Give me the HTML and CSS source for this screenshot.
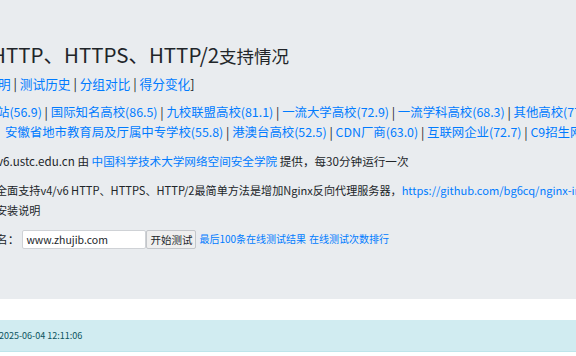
FILE: index.html
```html
<!DOCTYPE html>
<html lang="zh-CN">
<head>
  <meta charset="UTF-8" />
  <title>HTTP、HTTPS、HTTP/2支持情况</title>
  <link rel="stylesheet" href="styles.css">
</head>
<body>

  <div class="jumbotron">
    <h3 class="title">HTTP、HTTPS、HTTP/2<span class="title-cjk">支持情况</span></h3>

    <!-- top navigation -->
    <p class="nav-links"><a href="#">明</a> | <a href="#">测试历史</a> | <a href="#">分组对比</a> | <a href="#">得分变化</a>]</p>

    <!-- groups with scores -->
    <div class="groups">
      <p class="group-row row-first"><a href="#">站(56.9)</a> | <a href="#">国际知名高校(86.5)</a> | <a href="#">九校联盟高校(81.1)</a> | <a href="#">一流大学高校(72.9)</a> | <a href="#">一流学科高校(68.3)</a> | <a href="#">其他高校(77.0)</a></p>
      <p class="group-row row-second"><a href="#">安徽省地市教育局及厅属中专学校(55.8)</a> | <a href="#">港澳台高校(52.5)</a> | <a href="#">CDN厂商(63.0)</a> | <a href="#">互联网企业(72.7)</a> | <a href="#">C9招生网站(60.1)</a></p>
    </div>

    <p class="info">v6.ustc.edu.cn 由 <a href="#">中国科学技术大学网络空间安全学院</a> 提供，每30分钟运行一次</p>

    <p class="howto">全面支持v4/v6 HTTP、HTTPS、HTTP/2最简单方法是增加Nginx反向代理服务器，<a href="#">https://github.com/bg6cq/nginx-install</a><br>安装说明</p>

    <!-- online test -->
    <form class="test-form">
      <label for="host">名：</label>
      <input type="text" id="host" value="www.zhujib.com" />
      <button type="button">开始测试</button>
      <a href="#" class="small-link">最后100条在线测试结果</a>
      <a href="#" class="small-link">在线测试次数排行</a>
    </form>
  </div>

  <div class="alert">2025-06-04 12:11:06</div>

</body>
</html>
```

FILE: styles.css
```css
* {
  box-sizing: border-box;
}

body {
  margin: 0;
  font-family: "Noto Sans CJK SC", sans-serif;
  font-size: 11.6px;
  line-height: 20px;
  color: #212529;
  background-color: #ffffff;
  overflow: hidden;
  white-space: nowrap;
}

a {
  color: #007bff;
  text-decoration: none;
}

p {
  margin: 0;
}

.jumbotron {
  background-color: #e9ecef;
  height: 299px;
  padding-top: 41px;
}

.title {
  margin: 0 0 5px -9px;
  font-size: 20.5px;
  font-weight: 400;
  line-height: 26px;
}

.title-cjk {
  font-size: 17.5px;
}

.nav-links {
  margin-left: -2px;
  font-size: 12.7px;
}

/* groups */
.groups {
  margin-top: 8px;
  font-size: 12.4px;
}

.row-first {
  margin-left: -3px;
}

.row-second {
  margin-left: 5px;
}

.info {
  margin-top: 9px;
  margin-left: -3px;
}

.howto {
  margin-top: 9px;
  margin-left: -4px;
  font-size: 11.1px;
}

/* test form */
.test-form {
  display: flex;
  align-items: center;
  margin-top: 9px;
  margin-left: -4px;
  font-size: 11.7px;
}

.test-form label {
  margin-right: 3px;
}

.test-form input {
  width: 124px;
  height: 19px;
  padding: 0 3px;
  border: 1px solid #cfd2d6;
  border-radius: 2px;
  font-family: inherit;
  font-size: 10.5px;
  color: #212529;
}

.test-form button {
  height: 19px;
  padding: 0 3px;
  margin-right: 3px;
  border: 1px solid #c3c6ca;
  border-radius: 2px;
  background-color: #efefef;
  font-family: inherit;
  font-size: 10.5px;
  color: #212529;
}

.small-link {
  margin-right: 3px;
  font-size: 10px;
}

.alert {
  margin-top: 21px;
  height: 32px;
  margin-left: -1px;
  background-color: #d1ecf1;
  border-bottom: 1px solid #bee5eb;
  color: #0c5460;
  font-size: 9px;
  line-height: 31px;
}
```
